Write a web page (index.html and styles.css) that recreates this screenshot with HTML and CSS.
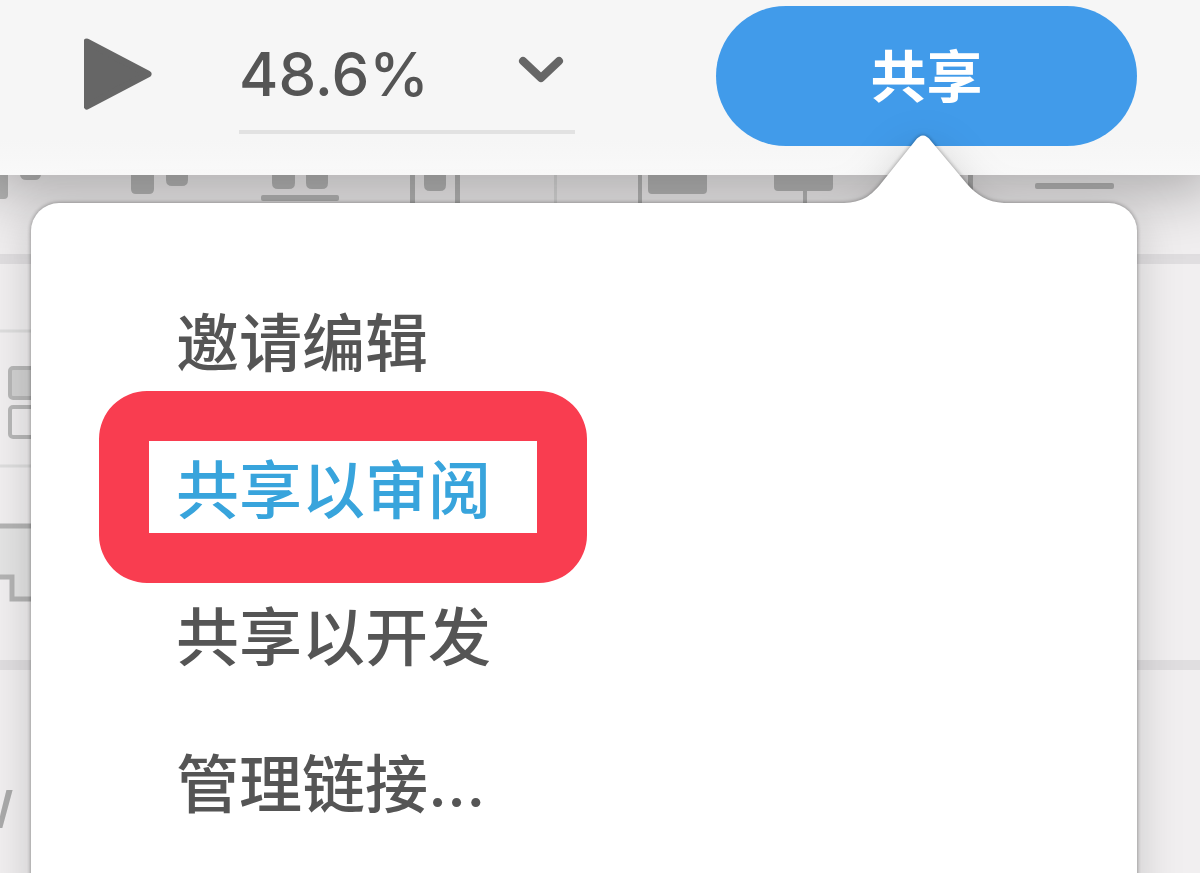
FILE: index.html
```html
<!DOCTYPE html>
<html lang="zh-CN">
<head>
<meta charset="utf-8">
<meta name="viewport" content="width=device-width, initial-scale=1">
<title>共享</title>
<link rel="stylesheet" href="styles.css">
</head>
<body>
<div class="app">
  <header class="toolbar">
    <button class="play" type="button" aria-label="播放">
      <svg width="68" height="72" viewBox="0 0 68 72" aria-hidden="true"><path d="M3 4 64 36 3 68Z" fill="#666" stroke="#666" stroke-width="7" stroke-linejoin="round"/></svg>
    </button>
    <div class="zoom">
      <select class="zoom-select" aria-label="缩放比例"><option>48.6%</option></select>
      <svg class="zoom-chevron" width="46" height="30" viewBox="0 0 46 30" aria-hidden="true"><path d="M5 6 23 23 41 6" fill="none" stroke="#666" stroke-width="8" stroke-linecap="round" stroke-linejoin="round"/></svg>
    </div>
    <button class="share" type="button" aria-haspopup="menu" aria-expanded="true">共享</button>
  </header>

  <main class="workspace">
    <section class="panel align-bar">
      <svg width="1200" height="30" viewBox="0 0 1200 30" fill="#b8b8b8" aria-hidden="true">
        <path d="M0 0H8V20Q8 24 4 24H0ZM20 0H41Q40 5 35 5H26Q21 5 20 0Z"/>
        <path d="M131 0H154V14Q154 19 149 19H136Q131 19 131 14ZM166 0H188V5Q188 11 182 11H172Q166 11 166 5Z"/>
        <path d="M272 0H295V8Q295 14 289 14H278Q272 14 272 8ZM306 0H328V8Q328 14 322 14H312Q306 14 306 8Z"/>
        <rect x="261" y="20" width="78" height="6" rx="2"/>
        <path d="M410 0H415V30H410ZM455 0H460V30H455ZM638 0H642V30H638ZM803 0H807V30H803ZM968 0H973V30H968Z"/>
        <path d="M424 0H446V10Q446 16 440 16H430Q424 16 424 10Z"/>
        <path d="M554 0H557V30H554Z" fill="#dcdcdc"/>
        <path d="M648 0H707V15Q707 19 703 19H652Q648 19 648 15ZM774 0H833V12Q833 16 829 16H778Q774 16 774 12Z"/>
        <rect x="1035" y="8" width="79" height="6" rx="2"/>
      </svg>
    </section>
    <section class="panel">
      <svg width="40" height="380" viewBox="0 0 40 380" fill="none" aria-hidden="true">
        <path d="M0 67H40M0 202H40" stroke="#dedede" stroke-width="3"/>
        <rect x="10" y="104" width="48" height="30" rx="3" fill="#d2d2d2" stroke="#b8b8b8" stroke-width="4"/>
        <rect x="10" y="143" width="48" height="30" rx="3" stroke="#b8b8b8" stroke-width="4"/>
        <path d="M0 262H40V335H12V313H0Z" fill="#e4e4e4"/>
        <path d="M0 262H40M0 313H12V335H40" stroke="#b4b4b4" stroke-width="5"/>
      </svg>
    </section>
    <section class="panel size-panel">
      <label class="size-label">W</label>
    </section>
  </main>

  <div class="popover">
    <svg class="popover-arrow" width="160" height="70" viewBox="0 0 160 70" aria-hidden="true"><path d="M0 70V68C18 67 25 62 35 51L71 6Q79 -5 87 6L123 49C133 60 143 67 160 68V70Z" fill="#fff"/></svg>
    <ul class="menu" role="menu">
      <li class="menu-row" role="none"><button class="menu-item" type="button" role="menuitem">邀请编辑</button></li>
      <li class="menu-row marked" role="none"><button class="menu-item" type="button" role="menuitem">共享以审阅</button></li>
      <li class="menu-row" role="none"><button class="menu-item" type="button" role="menuitem">共享以开发</button></li>
      <li class="menu-row" role="none"><button class="menu-item" type="button" role="menuitem">管理链接...</button></li>
    </ul>
  </div>
</div>
</body>
</html>
```
FILE: styles.css
```css
*,
*::after {
  box-sizing: border-box;
}

body {
  margin: 0;
  font-family: Inter, "Noto Sans CJK SC", sans-serif;
  font-weight: 500;
  color: #555;
}

button,
select {
  margin: 0;
  padding: 0;
  border: 0;
  background: none;
  color: inherit;
  font: inherit;
}

.app {
  position: relative;
  display: flex;
  flex-direction: column;
  min-height: 100vh;
  overflow: hidden;
}

.toolbar {
  position: relative;
  display: flex;
  align-items: flex-start;
  padding: 6px 63px 29px 84px;
  background: linear-gradient(#f6f6f6 80%, #f9f9f9);
  box-shadow: 0 0 60px 16px rgba(0, 0, 0, 0.3);
}

.play {
  display: flex;
  align-items: center;
  height: 136px;
}

.zoom {
  position: relative;
  width: 336px;
  margin: 12px 24px 0 87px;
  border-bottom: 4px solid #e2e2e2;
}

.zoom-select {
  appearance: none;
  display: block;
  width: 100%;
  height: 112px;
  font-size: 60px;
}

.zoom-chevron {
  position: absolute;
  top: 37px;
  right: 11px;
  pointer-events: none;
}

.share {
  width: 421px;
  height: 140px;
  margin-left: auto;
  padding-bottom: 8px;
  border-radius: 70px;
  background: #419bea;
  color: #fff;
  font-size: 56px;
  font-weight: 700;
}

.workspace {
  display: flex;
  flex: 1;
  flex-direction: column;
  background: #f1eff0;
}

.panel {
  height: 406px;
  border-bottom: 10px solid #e0dee0;
}

.panel svg {
  display: block;
}

.align-bar {
  height: 89px;
}

.size-panel {
  flex: 1;
  border-bottom: 0;
  padding-top: 108px;
}

.size-label {
  display: flex;
  justify-content: flex-end;
  width: 14px;
  overflow: hidden;
  color: #aaa;
  font-size: 52px;
  line-height: 64px;
}

.popover {
  position: absolute;
  top: 203px;
  right: 63px;
  bottom: -40px;
  left: 31px;
  padding: 62px 68px 0;
  border-radius: 28px;
  background: #fff;
  filter: drop-shadow(0 0 2px rgba(0, 0, 0, 0.4)) drop-shadow(0 12px 22px rgba(0, 0, 0, 0.18));
}

.popover-arrow {
  position: absolute;
  top: -68px;
  right: 133px;
}

.menu {
  margin: 0;
  padding: 0;
  list-style: none;
}

.menu-row {
  position: relative;
  height: 147px;
}

.menu-item {
  display: block;
  width: 488px;
  height: 100%;
  padding-left: 77px;
  font-size: 63px;
  text-align: left;
}

.marked {
  color: #38a4dc;
}

.marked::after {
  content: "";
  position: absolute;
  top: -21px;
  left: 0;
  width: 488px;
  height: 192px;
  border: 50px solid #f93d50;
  border-radius: 48px;
  pointer-events: none;
}
```
